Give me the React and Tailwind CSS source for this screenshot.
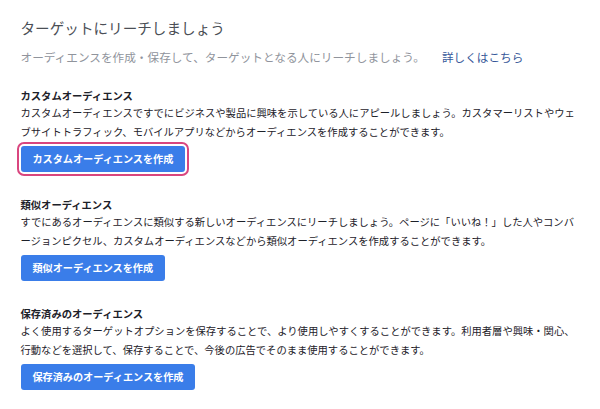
import React from "react";

const font = { fontFamily: '"Noto Sans CJK JP", "Noto Sans", sans-serif' };

function Section({ title, lines, button, ring, first }) {
  return (
    <div className={first ? "" : "mt-[26px]"}>
      <div className="text-[10.3px] leading-[14px] font-bold text-[#1d2129]">{title}</div>
      <div className="text-[10.3px] leading-[19px] text-[#1d2129] whitespace-nowrap">
        {lines[0]}
        <br />
        {lines[1]}
      </div>
      <div className="mt-[5px] flex">
        <div className="relative flex">
          {ring && (
            <span className="absolute -inset-[4px] rounded-[7px] border-[2.5px] border-[#d9467f]"></span>
          )}
          <button className="relative block h-[26px] px-[12px] rounded-[3px] bg-[#3a7de9] text-white text-[10.15px] font-bold leading-[26px] whitespace-nowrap">
            {button}
          </button>
        </div>
      </div>
    </div>
  );
}

export default function App() {
  return (
    <div className="w-[600px] h-[409px] bg-white pl-[20.5px] pt-[18px] overflow-hidden" style={font}>
      <div className="text-[14.6px] leading-[20px] text-[#4b4f56] whitespace-nowrap">
        ターゲットにリーチしましょう
      </div>
      <div className="mt-[10px] text-[11.65px] leading-[18px] text-[#90949c] whitespace-nowrap">
        オーディエンスを作成・保存して、ターゲットとなる人にリーチしましょう。
        <span className="ml-[17px] text-[#365899]">詳しくはこちら</span>
      </div>
      <div className="mt-[23px]">
        <Section
          first
          ring
          title="カスタムオーディエンス"
          lines={[
            "カスタムオーディエンスですでにビジネスや製品に興味を示している人にアピールしましょう。カスタマーリストやウェ",
            "ブサイトトラフィック、モバイルアプリなどからオーディエンスを作成することができます。",
          ]}
          button="カスタムオーディエンスを作成"
        />
        <Section
          title="類似オーディエンス"
          lines={[
            "すでにあるオーディエンスに類似する新しいオーディエンスにリーチしましょう。ページに「いいね！」した人やコンバ",
            "ージョンピクセル、カスタムオーディエンスなどから類似オーディエンスを作成することができます。",
          ]}
          button="類似オーディエンスを作成"
        />
        <Section
          title="保存済みのオーディエンス"
          lines={[
            "よく使用するターゲットオプションを保存することで、より使用しやすくすることができます。利用者層や興味・関心、",
            "行動などを選択して、保存することで、今後の広告でそのまま使用することができます。",
          ]}
          button="保存済みのオーディエンスを作成"
        />
      </div>
    </div>
  );
}
